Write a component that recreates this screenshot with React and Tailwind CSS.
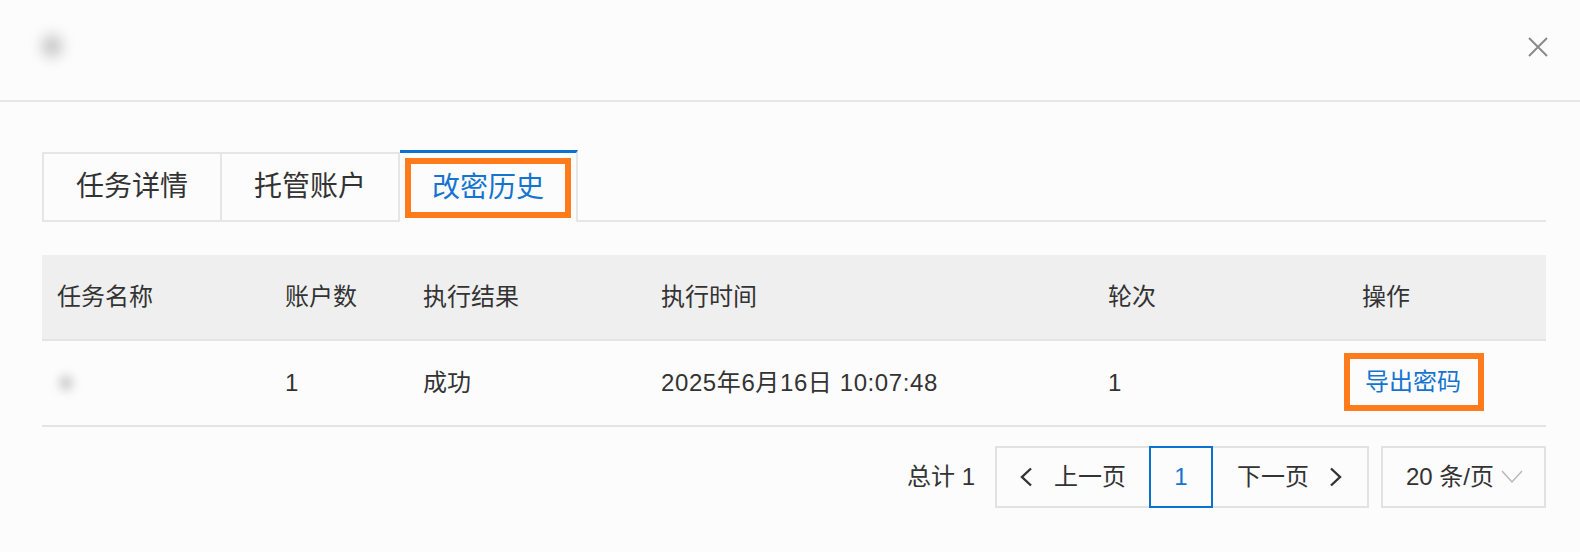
import React from "react";

const font = { fontFamily: '"Liberation Sans", "Noto Sans CJK SC", sans-serif' };

function ChevronLeft() {
  return (
    <svg width="16" height="20" viewBox="0 0 16 20" fill="none">
      <path d="M13 1.5L4 10l9 8.5" stroke="#333" strokeWidth="2.4" />
    </svg>
  );
}
function ChevronRight() {
  return (
    <svg width="16" height="20" viewBox="0 0 16 20" fill="none">
      <path d="M3 1.5l9 8.5-9 8.5" stroke="#333" strokeWidth="2.4" />
    </svg>
  );
}

export default function App() {
  const cols = "grid grid-cols-[228px_138px_238px_447px_254px_1fr]";
  return (
    <div className="w-[1580px] h-[552px] bg-[#fcfcfc] text-[#333] overflow-hidden" style={font}>
      {/* header */}
      <div className="h-[102px] border-b-2 border-[#e6e6e6] flex items-center justify-between pl-[42px] pr-[32px]">
        <div className="w-[20px] h-[22px] mb-[8px] bg-[#c4c4c4] blur-[7px] rounded-full" />
        <svg width="20" height="20" viewBox="0 0 20 20" className="mb-[6px]">
          <path d="M1 1L19 19M19 1L1 19" stroke="#8a8a8a" strokeWidth="2" />
        </svg>
      </div>

      <div className="pl-[42px] pr-[34px]">
        {/* tabs */}
        <div className="mt-[48px] flex items-end border-b-2 border-[#e6e6e6] h-[72px]">
          <div className="h-[68px] border-2 border-b-0 border-[#e6e6e6] px-[32px] flex items-center text-[28px] leading-none">
            任务详情
          </div>
          <div className="h-[68px] border-t-2 border-r-2 border-[#e6e6e6] px-[32px] flex items-center text-[28px] leading-none">
            托管账户
          </div>
          <div className="h-[72px] -mb-[2px] bg-[#fcfcfc] border-t-[3px] border-t-[#0a72cf] border-r-2 border-r-[#e6e6e6] w-[178px] flex items-center justify-center pt-[1px]">
            <div className="h-[60px] border-[6px] border-[#ff7b1c] px-[21px] flex items-center text-[28px] leading-none text-[#1474d0]">
              改密历史
            </div>
          </div>
        </div>

        {/* table */}
        <div className="mt-[33px] text-[24px] leading-none">
          <div className={`${cols} h-[86px] bg-[#efefef] border-b-2 border-[#e4e4e4] items-center`}>
            <div className="pl-[15px]">任务名称</div>
            <div className="pl-[15px]">账户数</div>
            <div className="pl-[15px]">执行结果</div>
            <div className="pl-[15px]">执行时间</div>
            <div className="pl-[15px]">轮次</div>
            <div className="pl-[15px]">操作</div>
          </div>
          <div className={`${cols} h-[86px] border-b-2 border-[#e4e4e4] items-center`}>
            <div className="pl-[17px]">
              <div className="w-[14px] h-[16px] bg-[#cfcfcf] blur-[5px] rounded-full" />
            </div>
            <div className="pl-[15px]">1</div>
            <div className="pl-[15px]">成功</div>
            <div className="pl-[15px] tracking-[0.6px]">2025年6月16日 10:07:48</div>
            <div className="pl-[15px]">1</div>
            <div className="pl-[0px]">
              <div className="inline-flex items-center h-[58px] -ml-[3px] -mt-[3px] border-[6px] border-[#ff7b1c] pl-[15px] pr-[17px] text-[#1474d0]">
                导出密码
              </div>
            </div>
          </div>
        </div>

        {/* pagination */}
        <div className="mt-[19px] flex items-center justify-end text-[24px] leading-none">
          <div className="mr-[20px]">总计 1</div>
          <div className="flex h-[62px]">
            <div className="w-[156px] border-2 border-[#e2e2e2] flex items-center pl-[21px]">
              <ChevronLeft />
              <span className="ml-[20px]">上一页</span>
            </div>
            <div className="w-[64px] -ml-[2px] border-2 border-[#0a72cf] flex items-center justify-center text-[#1474d0] relative">
              1
            </div>
            <div className="w-[158px] -ml-[2px] border-2 border-[#e2e2e2] flex items-center pl-[24px]">
              <span>下一页</span>
              <span className="ml-[19px] flex"><ChevronRight /></span>
            </div>
          </div>
          <div className="ml-[12px] w-[165px] h-[62px] border-2 border-[#e2e2e2] flex items-center pl-[23px]">
            <span>20 条/页</span>
            <svg width="22" height="14" viewBox="0 0 22 14" className="ml-[7px]">
              <path d="M1 1l10 11L21 1" stroke="#b8b8b8" strokeWidth="1.5" fill="none" />
            </svg>
          </div>
        </div>
      </div>
    </div>
  );
}
